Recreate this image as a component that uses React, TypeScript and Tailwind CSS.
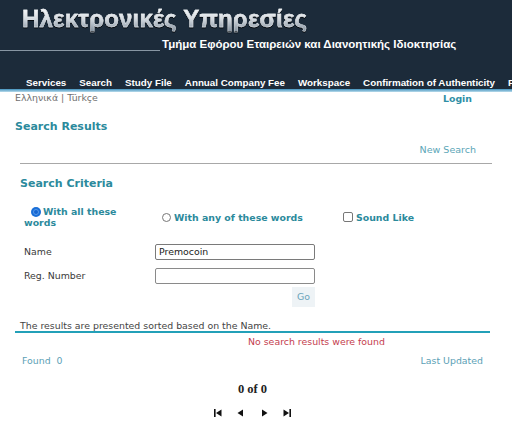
import type { ReactNode } from 'react';

const navItems = [
  'Services',
  'Search',
  'Study File',
  'Annual Company Fee',
  'Workspace',
  'Confirmation of Authenticity',
  'Forms',
];

function Radio({ checked = false }: { checked?: boolean }) {
  return checked ? (
    <span className="inline-flex w-[10px] h-[10px] rounded-full bg-[#1a6fd8] items-center justify-center shrink-0">
      <span className="w-[6px] h-[6px] rounded-full bg-[#1565d0] border border-[#5b9ae8]" />
    </span>
  ) : (
    <span className="inline-block w-[9px] h-[9px] rounded-full border border-[#777] bg-white shrink-0" />
  );
}

function PagerIcon({ children }: { children: ReactNode }) {
  return (
    <svg width="8" height="8" viewBox="0 0 8 8" className="block">
      {children}
    </svg>
  );
}

export default function App() {
  return (
    <div className="w-[512px] h-[441px] overflow-hidden bg-white font-['DejaVu_Sans',sans-serif]">
      {/* header */}
      <header className="bg-[#1c2b3a] h-[89px] flex flex-col">
        <div className="pl-[22px] pt-[7px]">
          <span className="inline-block font-['Liberation_Sans',sans-serif] font-bold text-[24px] leading-[24px] tracking-[0.2px] bg-gradient-to-b from-[#ffffff] via-[#d4dae0] to-[#8895a2] bg-clip-text text-transparent [-webkit-text-stroke:0.4px_#e6eaee] drop-shadow-[0_1px_0_rgba(0,0,0,0.7)]">
            Ηλεκτρονικές Υπηρεσίες
          </span>
        </div>
        <div className="flex items-start mt-[4px]">
          <div className="w-[160px] h-px bg-[#8896a3] mt-[12px]" />
          <span className="ml-[2px] font-['Liberation_Sans',sans-serif] font-bold text-[11.5px] leading-[13px] text-white">
            Τμήμα Εφόρου Εταιρειών και Διανοητικής Ιδιοκτησίας
          </span>
        </div>
        <nav className="mt-auto flex gap-[13px] pl-[26px] whitespace-nowrap overflow-hidden font-['Liberation_Sans',sans-serif] font-bold text-[9.8px] leading-[12px] text-white">
          {navItems.map((item) => (
            <span key={item}>{item}</span>
          ))}
        </nav>
      </header>
      <div className="h-[3px] bg-gradient-to-b from-[#3d92bd] to-[#b9dcec]" />

      {/* language + login */}
      <div className="flex justify-between pl-[15px] pr-[40px] text-[9.4px] leading-[11px]">
        <span className="text-[#707070]">Ελληνικά | Türkçe</span>
        <span className="font-bold text-[#2f8fa6] mt-px">Login</span>
      </div>

      <h1 className="mt-[16px] pl-[15px] text-[11px] leading-[13px] font-bold text-[#2b8a9c]">Search Results</h1>
      <div className="mt-[11px] flex justify-end pr-[36px] text-[9.5px] leading-[11px] text-[#5ba6b7]">New Search</div>
      <div className="mt-[8px] ml-[20px] w-[472px] h-px bg-[#a8a8a8]" />

      <h2 className="mt-[13px] pl-[20px] text-[11px] leading-[13px] font-bold text-[#2b8a9c]">Search Criteria</h2>

      {/* match options */}
      <div className="mt-[16px] flex items-center text-[9.4px] leading-[11px] font-bold text-[#2b8a9c]">
        <div className="w-[162px] pl-[24px]">
          <div className="flex items-center">
            <span className="ml-[7px] mr-[2px] flex">
              <Radio checked />
            </span>
            With all these
          </div>
          <div>words</div>
        </div>
        <div className="w-[181px] flex items-center">
          <span className="mr-[3px] flex">
            <Radio />
          </span>
          With any of these words
        </div>
        <div className="flex items-center">
          <span className="inline-block w-[10px] h-[10px] rounded-[2px] border border-[#777] bg-white mr-[3px]" />
          Sound Like
        </div>
      </div>

      {/* form */}
      <div className="mt-[16px] flex items-center pl-[24px] text-[9.4px] text-[#3a3a3a]">
        <span className="w-[131px]">Name</span>
        <div className="w-[160px] h-[16px] border border-[#7a7a7a] rounded-[2px] px-[3px] flex items-center text-[9.4px] text-[#222]">
          Premocoin
        </div>
      </div>
      <div className="mt-[8px] flex items-center pl-[24px] text-[9.4px] text-[#3a3a3a]">
        <span className="w-[131px]">Reg. Number</span>
        <div className="w-[160px] h-[16px] border border-[#8a8a8a] rounded-[2px]" />
      </div>
      <div className="mt-[3px] w-[315px] flex justify-end">
        <div className="w-[23px] h-[20px] bg-[#eef3f6] flex items-center justify-center text-[9.4px] text-[#6aa3ba]">Go</div>
      </div>

      <p className="mt-[13px] pl-[20px] text-[9.4px] leading-[11px] text-[#444]">The results are presented sorted based on the Name.</p>
      <div className="ml-[15px] w-[475px] h-[2px] bg-[#23a0b8]" />
      <p className="mt-[3px] pl-[248px] text-[9.4px] leading-[11px] text-[#c43d4e]">No search results were found</p>

      <div className="mt-[8px] flex justify-between pl-[22px] pr-[29px] text-[9.4px] leading-[11px] text-[#5ca1b6]">
        <span className="whitespace-pre">Found  0</span>
        <span>Last Updated</span>
      </div>

      <div className="mt-[16px] w-[505px] text-center font-['Liberation_Serif',serif] font-bold text-[12.5px] leading-[14px] text-[#222]">
        0 of 0
      </div>

      {/* pager */}
      <div className="mt-[13px] flex pl-[214px] text-[#111]">
        <PagerIcon>
          <rect x="0" y="0" width="1.6" height="8" fill="currentColor" />
          <polygon points="7.5,0.5 7.5,7.5 2,4" fill="currentColor" />
        </PagerIcon>
        <span className="ml-[15px]">
          <PagerIcon>
            <polygon points="6,0.5 6,7.5 0.5,4" fill="currentColor" />
          </PagerIcon>
        </span>
        <span className="ml-[16px]">
          <PagerIcon>
            <polygon points="1,0.5 1,7.5 6.5,4" fill="currentColor" />
          </PagerIcon>
        </span>
        <span className="ml-[14px]">
          <PagerIcon>
            <polygon points="0.5,0.5 0.5,7.5 6,4" fill="currentColor" />
            <rect x="6.4" y="0" width="1.6" height="8" fill="currentColor" />
          </PagerIcon>
        </span>
      </div>
    </div>
  );
}
